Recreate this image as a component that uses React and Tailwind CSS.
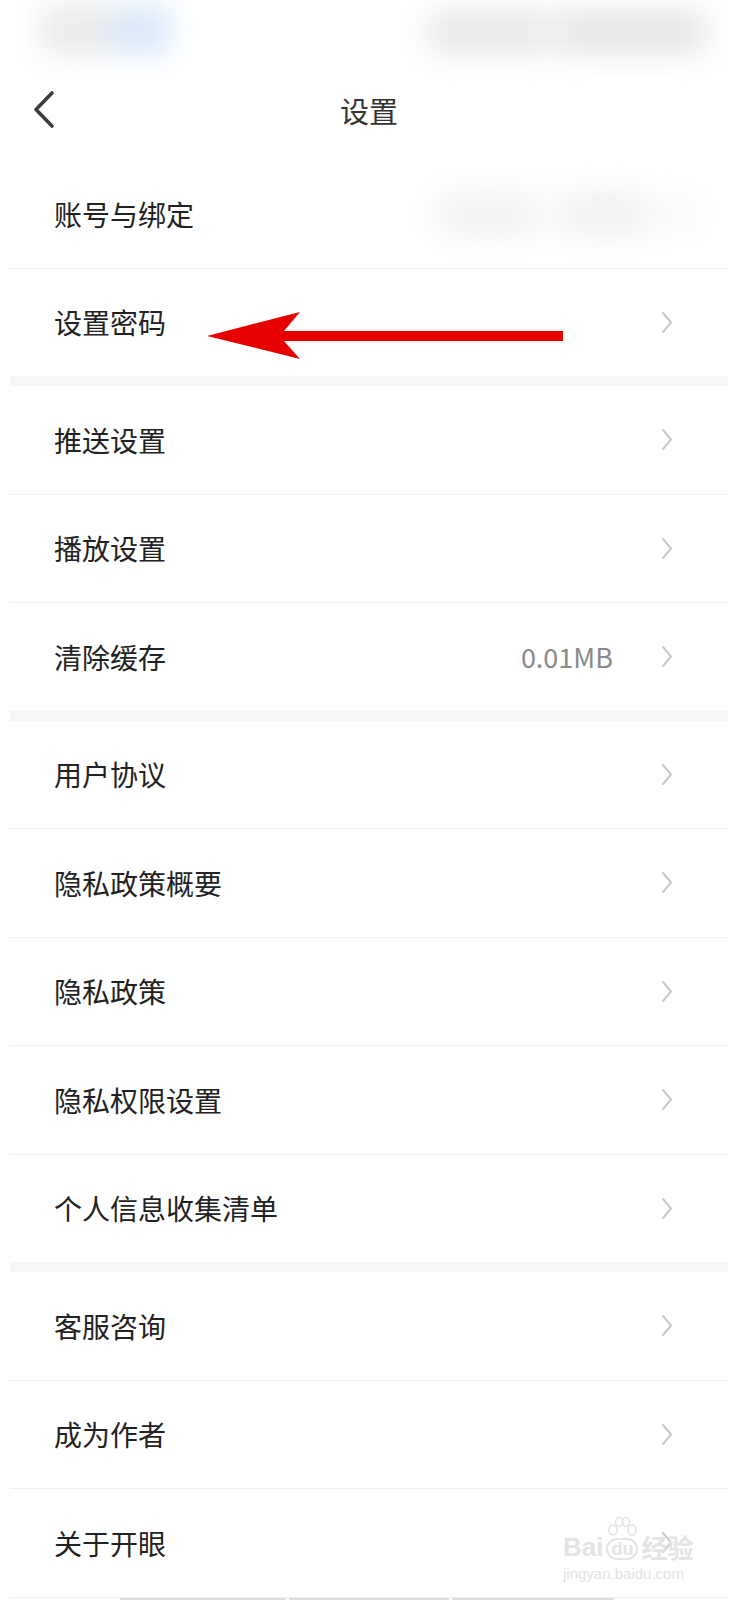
import React from "react";

const sections = [
  [{ t: "账号与绑定", blur: true }, { t: "设置密码" }],
  [{ t: "推送设置" }, { t: "播放设置" }, { t: "清除缓存", v: "0.01MB" }],
  [
    { t: "用户协议" },
    { t: "隐私政策概要" },
    { t: "隐私政策" },
    { t: "隐私权限设置" },
    { t: "个人信息收集清单" },
  ],
  [{ t: "客服咨询" }, { t: "成为作者" }, { t: "关于开眼" }],
];

function Chevron() {
  return (
    <svg width="12" height="23" viewBox="0 0 12 23" fill="none">
      <path d="M2 2 L10 11.5 L2 21" stroke="#c8c8c8" strokeWidth="2" strokeLinecap="round" strokeLinejoin="round" />
    </svg>
  );
}

function Row({ item }) {
  return (
    <div className="h-[107.5px] flex items-center justify-between pl-[44px] pr-[55px]">
      <span className="text-[28px] leading-none text-[#222222]">{item.t}</span>
      {item.blur ? (
        <div className="flex items-center gap-3 mr-[-24px] blur-lg">
          <div className="w-[110px] h-[46px] rounded-full bg-[#f1f1f1]" />
          <div className="w-[100px] h-[46px] rounded-full bg-[#f0f0f0]" />
          <div className="w-[30px] h-[40px] rounded-full bg-[#f6f6f6]" />
        </div>
      ) : (
        <div className="flex items-center gap-[48px]">
          {item.v && <span className="text-[27px] leading-none text-[#8a8a8a]">{item.v}</span>}
          <Chevron />
        </div>
      )}
    </div>
  );
}

export default function App() {
  return (
    <div className="relative w-[738px] h-[1600px] overflow-hidden bg-white font-['Noto_Sans_CJK_SC','Noto_Sans',sans-serif]">
      {/* blurred status bar */}
      <div className="h-[60px] flex items-center justify-between pl-[40px] pr-[32px]">
        <div className="flex items-center blur-lg">
          <div className="w-[72px] h-[46px] bg-[#e9e9e9]" />
          <div className="w-[58px] h-[46px] bg-[#d6e7fb]" />
        </div>
        <div className="flex items-center gap-2 blur-lg mt-[4px]">
          <div className="w-[120px] h-[44px] bg-[#e8e8e8]" />
          <div className="w-[150px] h-[44px] bg-[#e6e6e6]" />
        </div>
      </div>

      {/* header */}
      <div className="h-[100px] grid grid-cols-[1fr_auto_1fr] items-center">
        <div className="pl-[33px] flex items-center">
          <svg width="22" height="40" viewBox="0 0 22 40" fill="none">
            <path d="M19 3 L3 19.5 L19 36" stroke="#3c3c3c" strokeWidth="3.6" strokeLinecap="round" strokeLinejoin="round" />
          </svg>
        </div>
        <span className="text-[29px] leading-none text-[#333333]">设置</span>
        <div />
      </div>

      {/* list */}
      <div className="mx-[10px]">
        {sections.map((sec, si) => (
          <div key={si}>
            {si > 0 && <div className="h-[10px] bg-[#f6f6f6]" />}
            {sec.map((item, ii) => (
              <div key={ii}>
                <Row item={item} />
                {(ii < sec.length - 1 || si === sections.length - 1) && (
                  <div className="h-px bg-[#f0f0f0]" />
                )}
              </div>
            ))}
          </div>
        ))}
        <div className="flex gap-[3px] pl-[110px]">
          <div className="w-[166px] h-[4px] bg-[#dddddd]" />
          <div className="w-[160px] h-[4px] bg-[#dddddd]" />
          <div className="w-[162px] h-[4px] bg-[#dddddd]" />
        </div>
      </div>

      {/* red annotation arrow */}
      <svg className="absolute left-[206px] top-[311px]" width="358" height="49" viewBox="0 0 358 49">
        <polygon points="1,25 94,1 78,20 357,20 357,30 78,30 94,48" fill="#e60000" />
      </svg>

      {/* watermark */}
      <div className="absolute left-[563px] top-[1516px] flex flex-col items-start text-[#e4e4e4]">
        <div className="flex items-end">
          <span className="text-[26px] font-bold leading-none font-['Liberation_Sans',sans-serif]">Bai</span>
          <div className="relative flex flex-col items-center mx-[2px]">
            <svg width="34" height="22" viewBox="0 0 34 22" fill="none" stroke="#e4e4e4" strokeWidth="1.6">
              <ellipse cx="8" cy="14" rx="4" ry="5" />
              <ellipse cx="14" cy="6" rx="3.5" ry="4.5" />
              <ellipse cx="21" cy="6" rx="3.5" ry="4.5" />
              <ellipse cx="27" cy="14" rx="4" ry="5" />
            </svg>
            <span className="text-[18px] font-bold leading-none border-2 border-[#e4e4e4] rounded-full px-[3px] font-['Liberation_Sans',sans-serif]">du</span>
          </div>
          <span className="text-[26px] font-bold leading-none">经验</span>
        </div>
        <span className="text-[15px] leading-none mt-[6px] font-['Liberation_Sans',sans-serif]">jingyan.baidu.com</span>
      </div>
    </div>
  );
}
